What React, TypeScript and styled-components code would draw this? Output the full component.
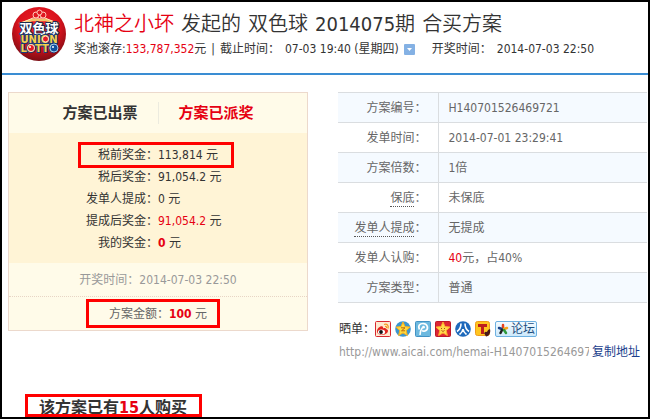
import React from "react";
import styled, { createGlobalStyle } from "styled-components";

const RED = "#e60012";

const GlobalStyle = createGlobalStyle`
  * { box-sizing: border-box; }
  body {
    margin: 0;
    background: #fff;
    color: #333;
    font: 12px/22px "DejaVu Sans Condensed", "Noto Sans CJK SC", sans-serif;
  }
  h1, h2, h3, p, dl, dt, dd { margin: 0; }
`;

const Frame = styled.main`
  min-height: 100vh;
  border: 2px solid #000;
  overflow: hidden;
`;

const Header = styled.header`
  display: flex;
  gap: 8px;
  height: 73px;
  padding: 5px 10px 0;
  border-bottom: 2px solid #3a8dd3;
`;

const HeaderText = styled.div`
  flex: 1;
  min-width: 0;
  padding-top: 3px;
  white-space: nowrap;
`;

const Title = styled.h1`
  display: flex;
  gap: 7px;
  font-size: 20px;
  line-height: 28px;
  font-weight: 350;
`;

const Red = styled.span`
  color: ${RED};
`;

const RedStrong = styled.strong`
  color: ${RED};
`;

const Facts = styled.div`
  display: flex;
  align-items: center;
  gap: 5px;
`;

const DrawTime = styled.span`
  padding-left: 12px;
`;

const ToggleButton = styled.button`
  display: flex;
  width: 11px;
  height: 11px;
  padding: 0;
  border: 0;
  border-radius: 1px;
  background: #84b1e4;
  align-items: center;
  justify-content: center;
`;

const Columns = styled.div`
  display: grid;
  grid-template-columns: minmax(0, 300fr) minmax(0, 309fr);
  gap: 30px;
  align-items: start;
  padding: 17px 1px 0 6px;
`;

const Panel = styled.section`
  border: 1px solid #ecd9cc;
  background: #fffbe9;
`;

const PanelHead = styled.div`
  display: flex;
  justify-content: center;
  align-items: center;
  height: 40px;
`;

const Status = styled.h2<{ $paid?: boolean }>`
  padding: 0 20px;
  font-size: 15px;
  line-height: 22px;
  color: ${(p) => (p.$paid ? RED : "#333")};
  border-left: ${(p) => (p.$paid ? "1px solid #ecebdf" : "0")};
`;

const Prizes = styled.dl`
  padding: 11px 0 9px;
  background: #fff4d6;
`;

const PrizeRow = styled.div`
  position: relative;
  display: grid;
  grid-template-columns: 1fr 1fr;
  dt { text-align: right; }
`;

const Marker = styled.span<{ $width: number; $shift: number; $out: number }>`
  position: absolute;
  top: ${(p) => -p.$out}px;
  bottom: ${(p) => -p.$out}px;
  left: calc(50% - ${(p) => p.$shift}px);
  width: ${(p) => p.$width}px;
  border: 3px solid #f00;
  pointer-events: none;
`;

const PanelNote = styled.p`
  height: 34px;
  line-height: 34px;
  text-align: center;
  color: #999;
  border-bottom: 1px dotted #e8d5c5;
`;

const Amount = styled.p`
  position: relative;
  height: 33px;
  line-height: 34px;
  text-align: center;
  color: #666;
`;

const InfoTable = styled.table`
  width: 100%;
  border-collapse: collapse;
  color: #666;
  tr { border: solid #dadde0; border-width: 1px 0; }
  tr:nth-child(odd) { background: #f5faff; }
  th, td { height: 30px; padding: 0; text-align: left; font-weight: 400; }
  th { width: 100px; padding-right: 11px; text-align: right; border-right: 1px solid #dadde0; }
  td { padding-left: 10px; }
`;

const Term = styled.abbr`
  padding-bottom: 1px;
  text-decoration: none;
  border-bottom: 1px dotted #555;
`;

const Share = styled.div`
  display: flex;
  align-items: center;
  height: 22px;
  margin-top: 15px;
  padding-left: 1px;
`;

const ShareLinks = styled.div`
  display: flex;
  gap: 4px;
`;

const ShareLink = styled.a`
  display: flex;
`;

const ForumLink = styled.a`
  display: flex;
  height: 16px;
  padding: 0 1px;
  align-items: center;
  gap: 2px;
  line-height: 14px;
  text-decoration: none;
  color: #1d4e7e;
  border: 1px solid #6db0e0;
  border-radius: 2px;
  background: linear-gradient(#f4fbff, #cde9fb);
`;

const LinkRow = styled.div`
  display: flex;
  gap: 3px;
  padding: 1px 7px 0 1px;
`;

const UrlInput = styled.input`
  flex: 1;
  min-width: 0;
  height: 22px;
  padding: 0;
  border: 0;
  background: none;
  font: inherit;
  color: #999;
`;

const CopyButton = styled.button`
  padding: 0;
  border: 0;
  background: none;
  font: inherit;
  line-height: 20px;
  color: #1a3e8c;
`;

const Buyers = styled.h2`
  position: relative;
  width: fit-content;
  height: 23px;
  margin: 31px 0 0 23px;
  padding: 0 15px 0 14px;
  font-size: 16px;
  line-height: 27px;
`;

const BuyersMarker = styled.span`
  position: absolute;
  inset: 0;
  border: 3px solid #f00;
`;

const Logo = () => (
  <svg width="54" height="54" viewBox="0 0 54 54" role="img" aria-label="双色球 Union Lotto">
    <defs>
      <radialGradient id="ball" cx="50%" cy="35%" r="65%">
        <stop offset="0" stopColor="#f0202a" />
        <stop offset=".6" stopColor="#d8121c" />
        <stop offset="1" stopColor="#7b0d14" />
      </radialGradient>
    </defs>
    <circle cx="27" cy="27" r="27" fill="url(#ball)" />
    <path d="M7 17 20 13h14l13 4" fill="none" stroke="#f3c46a" strokeWidth="2.5" />
    <path d="M9 16 21 11h12l12 5" fill="none" stroke="#fff0c4" strokeWidth="1" />
    <g fill="#e01620" stroke="#ffc9b8" strokeWidth="1">
      <circle cx="24" cy="8" r="3" />
      <circle cx="31" cy="8" r="3" />
      <circle cx="27.500" cy="5.500" r="2.500" />
      <circle cx="27.500" cy="10" r="1.500" />
    </g>
    <g textAnchor="middle" fontWeight="700" strokeLinejoin="round" paintOrder="stroke">
      <text x="27" y="26" fontSize="13" fontFamily="Noto Sans CJK SC, sans-serif" fill="#fff" stroke="#1b2c50" strokeWidth="2">双色球</text>
      <text x="27" y="36" fontSize="10" fontFamily="DejaVu Sans, sans-serif" fill="#f7cf4a" stroke="#173e7c" strokeWidth="2">UNION</text>
      <text x="27" y="45" fontSize="10" fontFamily="DejaVu Sans, sans-serif" fill="#f7cf4a" stroke="#173e7c" strokeWidth="2">LOTTO</text>
    </g>
    <circle cx="33.500" cy="32" r="3" fill="#e51b24" stroke="#fbe3d0" />
    <circle cx="19" cy="41" r="3.500" fill="#e51b24" stroke="#fbe3d0" />
    <circle cx="42" cy="41" r="4" fill="#12509c" stroke="#9ecbf0" />
    <circle cx="18" cy="40" r="1" fill="#fff" />
    <circle cx="41" cy="40" r="1" fill="#fff" />
  </svg>
);

const STAR = "M8 1 10 5.600 15 6.100 11.200 9.500 12.400 14.500 8 11.900 3.600 14.500 4.800 9.500 1 6.100 6 5.600Z";

const shareIcons: { name: string; art: React.ReactNode }[] = [
  {
    name: "新浪微博",
    art: (
      <>
        <rect x=".5" y=".5" width="15" height="15" rx="1" fill="#ffe9cf" stroke="#d8282f" />
        <path d="M9 3.500c3-1 5 1 4 4M10 5.500c1.300-.3 2 .5 1.500 1.700" fill="none" stroke="#f39a1d" strokeWidth="1.200" />
        <path d="M2 10c0-2.500 3.500-5.500 5.500-4.500 1 .4.500 1.700.5 1.700s3-1 3 .8c2.500.5 2.500 2.500 1 4-3 3-10 2.500-10-2Z" fill="#e2231d" />
        <ellipse cx="6.500" cy="10.900" rx="3.600" ry="2.500" fill="#fff" />
        <circle cx="6" cy="11" r="1.900" fill="#111" />
      </>
    ),
  },
  {
    name: "QQ空间",
    art: (
      <>
        <circle cx="8" cy="8" r="7.800" fill="#3b95cf" />
        <path d={STAR} fill="#ffdc3f" stroke="#f5ae1f" strokeWidth="1" strokeLinejoin="round" />
        <path d="M6 6.800h4L6.500 9.800H10" fill="none" stroke="#b8680c" strokeWidth="1" />
      </>
    ),
  },
  {
    name: "腾讯微博",
    art: (
      <>
        <rect x=".5" y=".5" width="15" height="15" rx="1" fill="#6db9df" stroke="#4292c4" />
        <path d="M5 14C5 11 5.500 9 7.500 6.500" fill="none" stroke="#fff" strokeWidth="1.500" />
        <path d="M4.500 8.500C2.500 4.500 5 2.500 8 2.500c5 0 6 6 2 7.500-1.500.5-2.500 0-3-.5" fill="none" stroke="#fff" strokeWidth="1.700" />
        <circle cx="8.500" cy="6.200" r="1.400" fill="#fff" />
      </>
    ),
  },
  {
    name: "朋友网",
    art: (
      <>
        <rect x=".5" y=".5" width="15" height="15" rx="1" fill="#dc2734" stroke="#bf1727" />
        <path d={STAR} fill="#ffdc4c" stroke="#ffab2c" strokeLinejoin="round" />
        <path d="M6.500 7v1M9.500 7v1M6.500 9.500c1 1 2 1 3 0" fill="none" stroke="#b04810" />
      </>
    ),
  },
  {
    name: "人人网",
    art: (
      <>
        <circle cx="8" cy="8" r="7.800" fill="#1e69bb" />
        <path d="M6 2.500C6 6 5 8.500 2 10.500M10 2.500C10 6 11 8.500 14 10.500M8 8c-.3 2-1.500 4-3.500 5.500M8 8c.3 2 1.500 4 3.500 5.500" fill="none" stroke="#fff" strokeWidth="1.600" />
      </>
    ),
  },
  {
    name: "天涯",
    art: (
      <>
        <rect x=".5" y=".5" width="14" height="14" rx="2" fill="#ffc51f" stroke="#ef9b1b" />
        <path d="M3 3h9v3H9v7H6V6H3Z" fill="#bd1e1c" />
        <path d="M9 12c2-2 3 0 4-3l2-1c1 4-1 7-4 7.500Z" fill="#4a1918" />
      </>
    ),
  },
];

const prizes = [
  { label: "税前奖金：", value: "113,814", marked: true },
  { label: "税后奖金：", value: "91,054.2" },
  { label: "发单人提成：", value: "0" },
  { label: "提成后奖金：", value: <Red>91,054.2</Red> },
  { label: "我的奖金：", value: <RedStrong>0</RedStrong> },
];

const info: { label: string; value: React.ReactNode; term?: boolean }[] = [
  { label: "方案编号", value: "H140701526469721" },
  { label: "发单时间", value: "2014-07-01 23:29:41" },
  { label: "方案倍数", value: "1倍" },
  { label: "保底", value: "未保底", term: true },
  { label: "发单人提成", value: "无提成", term: true },
  { label: "发单人认购", value: <><Red>40</Red>元，占40%</> },
  { label: "方案类型", value: "普通" },
];

export default function App() {
  return (
    <>
      <GlobalStyle />
      <Frame lang="zh-CN">
        <Header>
          <Logo />
          <HeaderText>
            <Title>
              <Red>北神之小坏</Red>
              <span>发起的</span>
              <span>双色球</span>
              <span>2014075期</span>
              <span>合买方案</span>
            </Title>
            <Facts>
              <span>奖池滚存:<Red>133,787,352</Red>元</span>
              <span>|</span>
              <span>截止时间：</span>
              <span>07-03 19:40 (星期四)</span>
              <ToggleButton type="button" aria-label="展开">
                <svg width="5" height="3" viewBox="0 0 5 3"><path d="M0 0h5L2.500 3Z" fill="#fff" /></svg>
              </ToggleButton>
              <DrawTime>开奖时间：</DrawTime>
              <span>2014-07-03 22:50</span>
            </Facts>
          </HeaderText>
        </Header>
        <Columns>
          <Panel>
            <PanelHead>
              <Status>方案已出票</Status>
              <Status $paid>方案已派奖</Status>
            </PanelHead>
            <Prizes>
              {prizes.map((p) => (
                <PrizeRow key={p.label}>
                  <dt>{p.label}</dt>
                  <dd>{p.value} 元{p.marked && <Marker $width={156} $shift={80} $out={2} />}</dd>
                </PrizeRow>
              ))}
            </Prizes>
            <PanelNote>开奖时间：2014-07-03 22:50</PanelNote>
            <Amount>
              方案金额：<RedStrong>100</RedStrong> 元
              <Marker $width={134} $shift={72} $out={-2} />
            </Amount>
          </Panel>
          <section>
            <InfoTable>
              <tbody>
                {info.map((row) => (
                  <tr key={row.label}>
                    <th scope="row">{row.term ? <Term>{row.label}</Term> : row.label}：</th>
                    <td>{row.value}</td>
                  </tr>
                ))}
              </tbody>
            </InfoTable>
            <Share>
              <span>晒单：</span>
              <ShareLinks>
                {shareIcons.map((icon) => (
                  <ShareLink key={icon.name} href="#share" aria-label={icon.name}>
                    <svg width="16" height="16" viewBox="0 0 16 16">{icon.art}</svg>
                  </ShareLink>
                ))}
                <ForumLink href="#forum">
                  <svg width="12" height="12" viewBox="0 0 12 12" fill="none" strokeWidth="2.500" strokeLinecap="round">
                    <path d="M6 5V2" stroke="#e8431f" />
                    <path d="M5 6 2 5" stroke="#173f86" />
                    <path d="M7 6l3-1" stroke="#f6a21b" />
                    <path d="M5 7 3.500 10" stroke="#222" />
                    <path d="M7 7l2 3" stroke="#2f9a3c" />
                  </svg>
                  论坛
                </ForumLink>
              </ShareLinks>
            </Share>
            <LinkRow>
              <UrlInput readOnly aria-label="方案地址" value="http://www.aicai.com/hemai-H140701526469721" />
              <CopyButton type="button">复制地址</CopyButton>
            </LinkRow>
          </section>
        </Columns>
        <Buyers>
          该方案已有<RedStrong>15</RedStrong>人购买
          <BuyersMarker />
        </Buyers>
      </Frame>
    </>
  );
}
